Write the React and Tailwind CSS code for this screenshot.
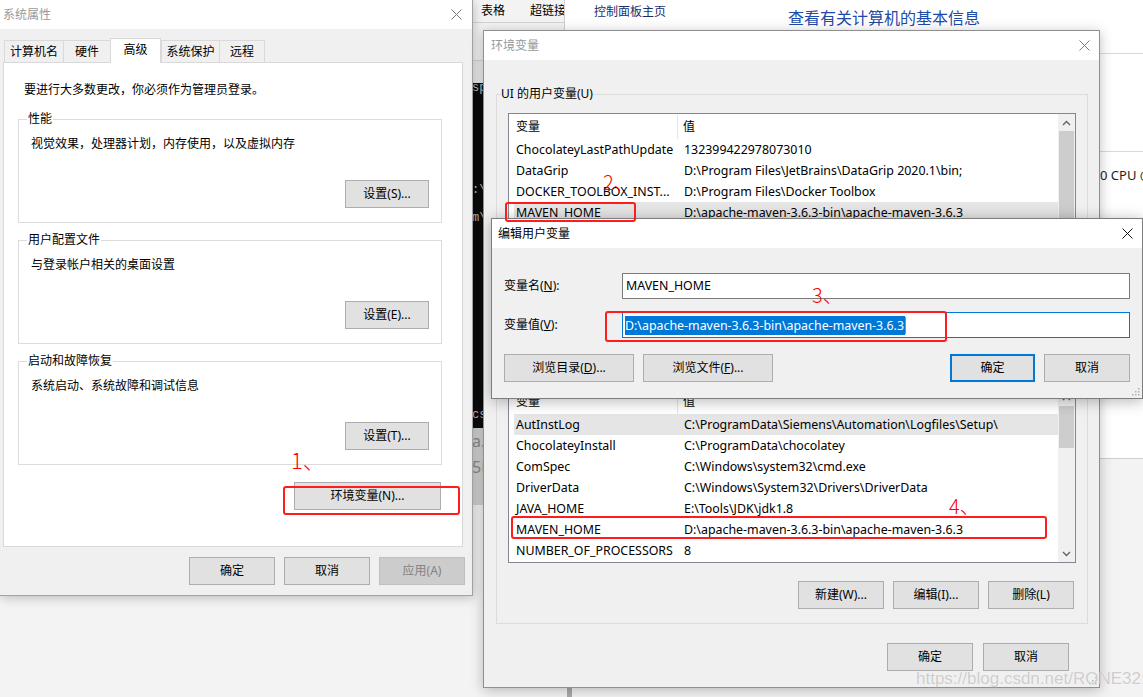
import React from "react";

function XIcon({ color }) {
  return (
    <svg width="11" height="11" viewBox="0 0 11 11" className="block">
      <path d="M0.5 0.5L10.5 10.5M10.5 0.5L0.5 10.5" stroke={color} strokeWidth="1" fill="none" />
    </svg>
  );
}

function Chevron({ up }) {
  return (
    <svg width="9" height="6" viewBox="0 0 9 6" className="block">
      <path d={up ? "M1 5L4.5 1.5L8 5" : "M1 1L4.5 4.5L8 1"} stroke="#606060" strokeWidth="1.3" fill="none" />
    </svg>
  );
}

function Grip() {
  return (
    <svg width="8" height="8" viewBox="0 0 8 8" className="block">
      <rect x="6" y="0" width="1.5" height="1.5" fill="#b0b0b0" />
      <rect x="3" y="3" width="1.5" height="1.5" fill="#b0b0b0" />
      <rect x="6" y="3" width="1.5" height="1.5" fill="#b0b0b0" />
      <rect x="0" y="6" width="1.5" height="1.5" fill="#b0b0b0" />
      <rect x="3" y="6" width="1.5" height="1.5" fill="#b0b0b0" />
      <rect x="6" y="6" width="1.5" height="1.5" fill="#b0b0b0" />
    </svg>
  );
}

function Btn({ className = "", variant = "normal", children }) {
  const look =
    variant === "disabled"
      ? "bg-[#cccccc] border border-[#bfbfbf] text-[#838383]"
      : variant === "primary"
      ? "bg-[#e1e1e1] border-2 border-[#0078d7]"
      : "bg-[#e1e1e1] border border-[#adadad]";
  return (
    <div className={`h-[28px] shrink-0 flex items-center justify-center whitespace-nowrap ${look} ${className}`}>
      {children}
    </div>
  );
}

function Tab({ className = "", selected = false, last = false, children }) {
  if (selected) {
    return (
      <div className={`relative z-10 h-[25px] bg-white border-x border-t border-[#d9d9d9] flex justify-center pt-[3px] ${className}`}>
        {children}
      </div>
    );
  }
  return (
    <div
      className={`h-[22px] mb-px bg-[#f0f0f0] border-l border-t border-[#d9d9d9] flex items-center justify-center ${
        last ? "border-r" : ""
      } ${className}`}
    >
      {children}
    </div>
  );
}

function Group({ title, text, btn, className = "" }) {
  return (
    <fieldset className={`ml-[14px] w-[424px] min-w-0 border border-[#dcdcdc] pb-[14px] ${className}`}>
      <legend className="ml-[8px] px-px leading-[16px]">{title}</legend>
      <p className="mt-[9px] ml-[12px] leading-[16px]">{text}</p>
      <div className="mt-[28px] flex justify-end pr-[12px]">
        <Btn className="w-[84px]">{btn}</Btn>
      </div>
    </fieldset>
  );
}

function SysProps() {
  return (
    <div className="absolute left-0 top-0 z-20 w-[473px] flex flex-col bg-[#f0f0f0] border-r border-b border-[#a3a3a3] shadow-[1px_2px_10px_rgba(0,0,0,0.22)]">
      <div className="h-[29px] bg-white flex items-center justify-between pl-[3px] pr-[10px]">
        <span className="text-[#999999]">系统属性</span>
        <XIcon color="#7a7a7a" />
      </div>
      <div className="h-[34px] flex items-end pl-[4px]">
        <Tab className="w-[59px]">计算机名</Tab>
        <Tab className="w-[47px]">硬件</Tab>
        <Tab selected className="w-[51px]">高级</Tab>
        <Tab className="w-[58px]">系统保护</Tab>
        <Tab last className="w-[46px]">远程</Tab>
      </div>
      <div className="-mt-px ml-[3px] w-[460px] h-[485px] bg-white border border-[#d9d9d9] flex flex-col">
        <p className="mt-[19px] ml-[20px] leading-[16px]">要进行大多数更改，你必须作为管理员登录。</p>
        <Group className="mt-[13px]" title="性能" text="视觉效果，处理器计划，内存使用，以及虚拟内存" btn="设置(S)..." />
        <Group className="mt-[9px]" title="用户配置文件" text="与登录帐户相关的桌面设置" btn="设置(E)..." />
        <Group className="mt-[9px]" title="启动和故障恢复" text="系统启动、系统故障和调试信息" btn="设置(T)..." />
        <div className="mt-[17px] ml-[290px]">
          <Btn className="w-[147px]">环境变量(N)...</Btn>
        </div>
      </div>
      <div className="flex justify-end gap-[9px] pr-[7px] mt-[10px] mb-[10px]">
        <Btn className="w-[86px]">确定</Btn>
        <Btn className="w-[86px]">取消</Btn>
        <Btn variant="disabled" className="w-[86px]">应用(A)</Btn>
      </div>
    </div>
  );
}

function VarList({ rows, hl, heightClass, thumbClass }) {
  return (
    <div className={`mx-[11px] bg-white border border-[#828790] flex overflow-hidden ${heightClass}`}>
      <div className="flex-1 min-w-0 pl-[5px]">
        <div className="h-[25px] flex items-center pt-px">
          <div className="w-[164px] h-full pl-[2px] flex items-center border-r border-[#e5e5e5]">变量</div>
          <div className="pl-[5px]">值</div>
        </div>
        {rows.map(([k, v], i) => (
          <div
            key={i}
            className={`h-[21px] flex items-center whitespace-nowrap text-[12.4px] ${i === hl ? "bg-[#e5e5e5]" : ""}`}
          >
            <div className="w-[164px] shrink-0 pl-[2px] overflow-hidden">{k}</div>
            <div className="pl-[6px]">{v}</div>
          </div>
        ))}
      </div>
      <div className="w-[17px] shrink-0 bg-[#f0f0f0] flex flex-col">
        <div className="h-[17px] flex items-center justify-center">
          <Chevron up />
        </div>
        <div className={`mx-px bg-[#cdcdcd] ${thumbClass}`} />
        <div className="flex-1" />
        <div className="h-[17px] flex items-center justify-center">
          <Chevron />
        </div>
      </div>
    </div>
  );
}

const userRows = [
  ["ChocolateyLastPathUpdate", "132399422978073010"],
  ["DataGrip", "D:\\Program Files\\JetBrains\\DataGrip 2020.1\\bin;"],
  ["DOCKER_TOOLBOX_INST...", "D:\\Program Files\\Docker Toolbox"],
  ["MAVEN_HOME", "D:\\apache-maven-3.6.3-bin\\apache-maven-3.6.3"],
  ["OneDrive", "C:\\Users\\RONE\\OneDrive"],
  ["Path", "C:\\Users\\RONE\\AppData\\Local\\Microsoft\\WindowsApps;"],
  ["TEMP", "C:\\Users\\RONE\\AppData\\Local\\Temp"],
];

const sysRows = [
  ["AutInstLog", "C:\\ProgramData\\Siemens\\Automation\\Logfiles\\Setup\\"],
  ["ChocolateyInstall", "C:\\ProgramData\\chocolatey"],
  ["ComSpec", "C:\\Windows\\system32\\cmd.exe"],
  ["DriverData", "C:\\Windows\\System32\\Drivers\\DriverData"],
  ["JAVA_HOME", "E:\\Tools\\JDK\\jdk1.8"],
  ["MAVEN_HOME", "D:\\apache-maven-3.6.3-bin\\apache-maven-3.6.3"],
  ["NUMBER_OF_PROCESSORS", "8"],
];

function EnvWindow() {
  return (
    <div className="absolute left-[483px] top-[30px] z-30 w-[617px] h-[658px] flex flex-col bg-[#f0f0f0] border border-[#8f8f8f] shadow-[0_2px_12px_rgba(0,0,0,0.25)]">
      <div className="h-[29px] shrink-0 bg-white flex items-center justify-between pl-[7px] pr-[9px]">
        <span className="text-[#999999]">环境变量</span>
        <XIcon color="#7a7a7a" />
      </div>
      <div className="pt-[26px] flex flex-col">
        <fieldset className="ml-[12px] w-[592px] min-w-0 border border-[#dcdcdc] pb-[13px]">
          <legend className="ml-[4px] leading-[16px]">UI 的用户变量(U)</legend>
          <div className="mt-[11px]">
            <VarList rows={userRows} hl={3} heightClass="h-[174px]" thumbClass="h-[110px]" />
          </div>
          <div className="mt-[19px] flex justify-end gap-[9px] pr-[13px]">
            <Btn className="w-[86px]">新建(N)...</Btn>
            <Btn className="w-[86px]">编辑(E)...</Btn>
            <Btn className="w-[86px]">删除(D)</Btn>
          </div>
        </fieldset>
        <fieldset className="mt-[13px] ml-[12px] w-[592px] min-w-0 border border-[#dcdcdc] pb-[14px]">
          <legend className="ml-[4px] leading-[16px]">系统变量(S)</legend>
          <div className="mt-[11px]">
            <VarList rows={sysRows} hl={0} heightClass="h-[175px]" thumbClass="h-[42px]" />
          </div>
          <div className="mt-[18px] flex justify-end gap-[9px] pr-[13px]">
            <Btn className="w-[86px]">新建(W)...</Btn>
            <Btn className="w-[86px]">编辑(I)...</Btn>
            <Btn className="w-[86px]">删除(L)</Btn>
          </div>
        </fieldset>
        <div className="mt-[19px] flex justify-end gap-[10px] pr-[30px]">
          <Btn className="w-[86px]">确定</Btn>
          <Btn className="w-[86px]">取消</Btn>
        </div>
      </div>
      <div className="absolute right-[2px] bottom-[2px]">
        <Grip />
      </div>
    </div>
  );
}

function EditDialog() {
  return (
    <div className="absolute left-[491px] top-[218px] z-40 w-[652px] h-[181px] flex flex-col bg-[#f0f0f0] border border-[#7d7d7d] shadow-[0_2px_14px_rgba(0,0,0,0.3)]">
      <div className="h-[29px] shrink-0 bg-white flex items-center justify-between pl-[6px] pr-[9px]">
        <span>编辑用户变量</span>
        <XIcon color="#111111" />
      </div>
      <div className="pt-[25px] pl-[12px] pr-[12px] flex flex-col">
        <div className="h-[26px] flex items-center">
          <div className="w-[118px] shrink-0">
            变量名(<span className="underline">N</span>):
          </div>
          <div className="flex-1 h-full bg-white border border-[#7a7a7a] flex items-center pl-[3px] text-[12.4px]">
            MAVEN_HOME
          </div>
        </div>
        <div className="mt-[13px] h-[26px] flex items-center">
          <div className="w-[118px] shrink-0">
            变量值(<span className="underline">V</span>):
          </div>
          <div className="flex-1 h-full bg-white border border-[#0078d7] flex items-center pl-[2px] text-[12.4px]">
            <span className="inline-block h-[19px] leading-[19px] bg-[#0078d7] text-white pr-px">
              D:\apache-maven-3.6.3-bin\apache-maven-3.6.3
            </span>
            <span className="inline-block w-px h-[17px] bg-[#e07a1f]" />
          </div>
        </div>
        <div className="mt-[16px] flex items-center">
          <Btn className="w-[130px]">
            浏览目录(<span className="underline">D</span>)...
          </Btn>
          <Btn className="w-[130px] ml-[9px]">
            浏览文件(<span className="underline">F</span>)...
          </Btn>
          <div className="flex-1" />
          <Btn variant="primary" className="w-[85px]">确定</Btn>
          <Btn className="w-[86px] ml-[9px]">取消</Btn>
        </div>
      </div>
      <div className="absolute right-[2px] bottom-[2px]">
        <Grip />
      </div>
    </div>
  );
}

function Background() {
  return (
    <>
      {/* control panel window */}
      <div className="absolute left-[564px] top-0 z-0 w-[579px] h-[459px] bg-white border-l border-b border-[#cfcfcf] flex">
        <div className="w-[200px] shrink-0 pl-[29px] pt-[4px] text-[#1a2f6e]">控制面板主页</div>
        <div className="flex-1 min-w-0 flex flex-col">
          <div className="pt-[7px] pl-[23px] text-[16px] leading-[22px] text-[#1e4aa8] whitespace-nowrap">
            查看有关计算机的基本信息
          </div>
          <div className="mt-[24px] h-[98px] border-t border-[#d9d9d9]" />
          <div className="border-t border-[#d9d9d9] pt-[15px] pl-[335px] whitespace-nowrap text-[13px] text-[#1e1e1e]">
            0 CPU @ 2.60GHz
          </div>
        </div>
      </div>
      {/* word window fragment */}
      <div className="absolute left-[472px] top-0 z-0 w-[92px] h-[83px] bg-[#ebebeb] flex flex-col overflow-hidden">
        <div className="h-[23px] shrink-0 bg-[#f3f3f3] border-b border-[#d4d4d4] flex items-center pl-[9px] gap-[25px] whitespace-nowrap">
          <span>表格</span>
          <span>超链接</span>
        </div>
        <div className="h-[38px] shrink-0 bg-[#f3f3f3] border-b border-[#d4d4d4]" />
      </div>
      {/* terminal fragment */}
      <div className="absolute left-[472px] top-[83px] z-0 w-[11px] h-[345px] bg-[#0c0c0c] overflow-hidden text-[#bdbdbd] text-[12px] leading-[14px] font-['Liberation_Mono',monospace] flex flex-col">
        <span className="mt-[-2px]">sp</span>
        <span className="mt-[88px]">:\</span>
        <span className="mt-[14px]">m\</span>
        <span className="mt-[183px]">cs</span>
      </div>
      <div className="absolute left-[472px] top-[428px] z-0 w-[11px] h-[77px] bg-[#d2d2d2] overflow-hidden text-[#8a8a8a] text-[16px] leading-[18px] flex flex-col">
        <span className="mt-[4px]">a.</span>
        <span className="mt-[8px]">5L</span>
      </div>
      <div className="absolute left-[567px] top-[680px] z-0 w-[5px] h-[17px] bg-[#a9a9a9]" />
    </>
  );
}

function Annotations() {
  const mark = "absolute z-50 text-[#ff0000] font-light whitespace-nowrap font-['Noto_Sans_CJK_SC',sans-serif]";
  const box = "absolute z-50 border-2 border-[#ff1c1c] rounded-[3px]";
  return (
    <>
      <div className={`${box} left-[283px] top-[486px] w-[177px] h-[29px]`} />
      <div className={`${mark} left-[291px] top-[448px] text-[22px] leading-[22px]`}>1、</div>
      <div className={`${box} left-[505px] top-[202px] w-[131px] h-[20px]`} />
      <div className={`${mark} left-[603px] top-[172px] text-[20px] leading-[20px]`}>2、</div>
      <div className={`${box} left-[605px] top-[311px] w-[342px] h-[31px]`} />
      <div className={`${mark} left-[812px] top-[285px] text-[20px] leading-[20px]`}>3、</div>
      <div className={`${box} left-[511px] top-[516px] w-[536px] h-[23px]`} />
      <div className={`${mark} left-[949px] top-[496px] text-[20px] leading-[20px]`}>4、</div>
      <div className="absolute z-50 left-[916px] top-[670px] text-[17px] leading-[17px] text-[#cdcdcd] whitespace-nowrap font-['Liberation_Sans',sans-serif] [text-shadow:0_0_1px_#ffffff]">
        https://blog.csdn.net/RONE321
      </div>
    </>
  );
}

export default function App() {
  return (
    <div className="relative w-[1143px] h-[697px] overflow-hidden bg-[#f3f3f3] text-black text-[12px] leading-[16px] font-['Noto_Sans','Noto_Sans_CJK_SC',sans-serif]">
      <Background />
      <SysProps />
      <EnvWindow />
      <EditDialog />
      <Annotations />
    </div>
  );
}
